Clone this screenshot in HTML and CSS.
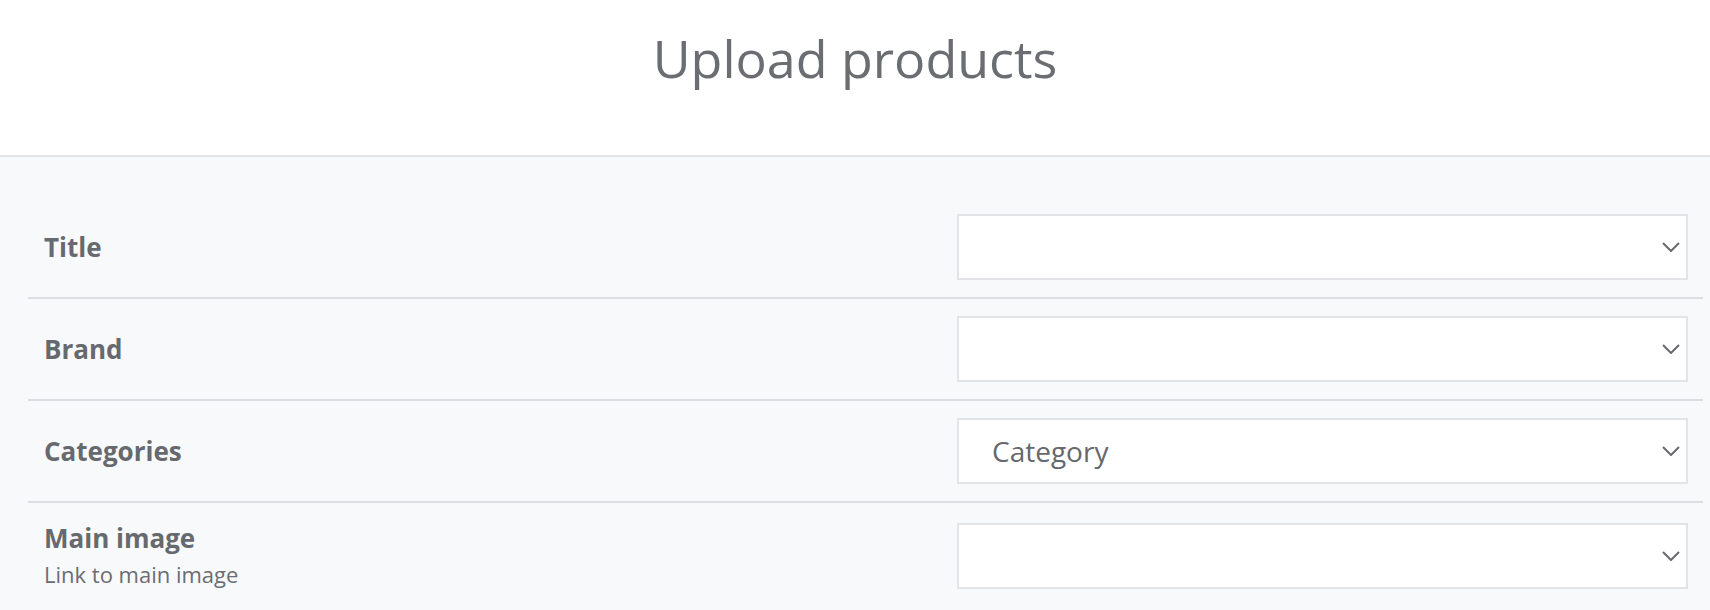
FILE: index.html
```html
<!DOCTYPE html>
<html lang="en">
<head>
<meta charset="utf-8">
<title>Upload products</title>
<link rel="stylesheet" href="styles.css">
</head>
<body>
<header class="page-header">
  <h1 class="page-title">Upload products</h1>
</header>
<main class="form-area">
  <div class="form-row">
    <div class="field-label"><div class="label-main">Title</div></div>
    <div class="select-box">
      <span class="select-value"></span>
      <svg class="chevron" viewBox="0 0 18 10" width="18" height="10"><path d="M1 1 L9 9 L17 1" fill="none" stroke="#67696c" stroke-width="2"/></svg>
    </div>
  </div>
  <div class="form-row">
    <div class="field-label"><div class="label-main">Brand</div></div>
    <div class="select-box">
      <span class="select-value"></span>
      <svg class="chevron" viewBox="0 0 18 10" width="18" height="10"><path d="M1 1 L9 9 L17 1" fill="none" stroke="#67696c" stroke-width="2"/></svg>
    </div>
  </div>
  <div class="form-row">
    <div class="field-label"><div class="label-main">Categories</div></div>
    <div class="select-box">
      <span class="select-value">Category</span>
      <svg class="chevron" viewBox="0 0 18 10" width="18" height="10"><path d="M1 1 L9 9 L17 1" fill="none" stroke="#67696c" stroke-width="2"/></svg>
    </div>
  </div>
  <div class="form-row">
    <div class="field-label">
      <div class="label-main">Main image</div>
      <div class="label-sub">Link to main image</div>
    </div>
    <div class="select-box">
      <span class="select-value"></span>
      <svg class="chevron" viewBox="0 0 18 10" width="18" height="10"><path d="M1 1 L9 9 L17 1" fill="none" stroke="#67696c" stroke-width="2"/></svg>
    </div>
  </div>
</main>
</body>
</html>
```

FILE: styles.css
```css
html, body {
  margin: 0;
  padding: 0;
}
body {
  font-family: "Open Sans", "Noto Sans", sans-serif;
  background: #f8f9fb;
  color: #6a6d71;
  height: 610px;
  overflow: hidden;
}
.page-header {
  background: #ffffff;
  border-bottom: 2px solid #e3e4e6;
  padding-top: 22px;
  height: 133px;
}
.page-title {
  margin: 0;
  text-align: center;
  font-weight: 400;
  font-size: 52px;
  line-height: 71px;
  color: #6a6e72;
}
.form-area {
  padding: 40px 7px 0 28px;
}
.form-row {
  display: flex;
  align-items: center;
  justify-content: space-between;
  padding: 17px 15px 17px 16px;
  border-bottom: 2px solid #dcdde0;
}
.form-row:last-child {
  padding-bottom: 24px;
}
.label-main {
  font-size: 26px;
  font-weight: 700;
  line-height: 36px;
  color: #66696d;
}
.label-sub {
  font-size: 22px;
  line-height: 36px;
  color: #6a6d71;
}
.select-box {
  width: 731px;
  height: 66px;
  box-sizing: border-box;
  background: #ffffff;
  border: 2px solid #e3e4e7;
  display: flex;
  align-items: center;
  padding: 0 6px 0 33px;
}
.select-value {
  flex: 1;
  font-size: 28px;
  color: #65686c;
}
.chevron {
  display: block;
  flex: none;
}
```
